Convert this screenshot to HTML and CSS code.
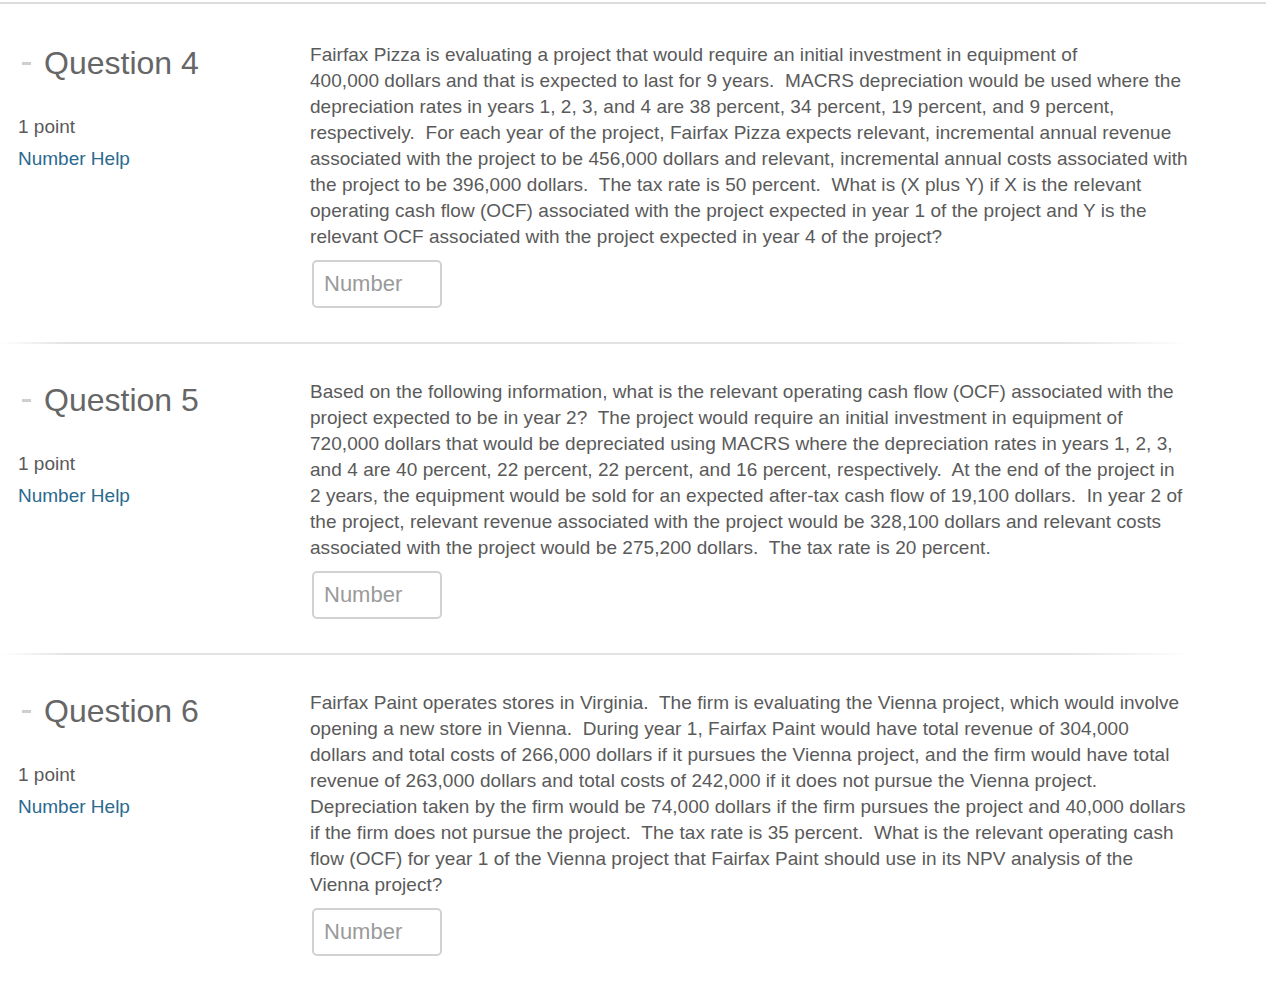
FILE: index.html
```html
<!DOCTYPE html>
<html>
<head>
<meta charset="utf-8">
<link rel="stylesheet" href="styles.css">
</head>
<body>
<div class="topline"></div>
<div class="quiz">
  <section class="question">
    <div class="meta">
      <h2 class="qtitle"><span class="dash"></span>Question 4</h2>
      <div class="points">1 point</div>
      <a class="help" href="#">Number Help</a>
    </div>
    <div class="body">
      <p class="prompt">Fairfax Pizza is evaluating a project that would require an initial investment in equipment of<br>400,000 dollars and that is expected to last for 9 years.&nbsp; MACRS depreciation would be used where the<br>depreciation rates in years 1, 2, 3, and 4 are 38 percent, 34 percent, 19 percent, and 9 percent,<br>respectively.&nbsp; For each year of the project, Fairfax Pizza expects relevant, incremental annual revenue<br>associated with the project to be 456,000 dollars and relevant, incremental annual costs associated with<br>the project to be 396,000 dollars.&nbsp; The tax rate is 50 percent.&nbsp; What is (X plus Y) if X is the relevant<br>operating cash flow (OCF) associated with the project expected in year 1 of the project and Y is the<br>relevant OCF associated with the project expected in year 4 of the project?</p>
      <input class="answer" type="text" placeholder="Number">
    </div>
  </section>
  <div class="divider"></div>
  <section class="question">
    <div class="meta">
      <h2 class="qtitle"><span class="dash"></span>Question 5</h2>
      <div class="points">1 point</div>
      <a class="help" href="#">Number Help</a>
    </div>
    <div class="body">
      <p class="prompt">Based on the following information, what is the relevant operating cash flow (OCF) associated with the<br>project expected to be in year 2?&nbsp; The project would require an initial investment in equipment of<br>720,000 dollars that would be depreciated using MACRS where the depreciation rates in years 1, 2, 3,<br>and 4 are 40 percent, 22 percent, 22 percent, and 16 percent, respectively.&nbsp; At the end of the project in<br>2 years, the equipment would be sold for an expected after-tax cash flow of 19,100 dollars.&nbsp; In year 2 of<br>the project, relevant revenue associated with the project would be 328,100 dollars and relevant costs<br>associated with the project would be 275,200 dollars.&nbsp; The tax rate is 20 percent.</p>
      <input class="answer" type="text" placeholder="Number">
    </div>
  </section>
  <div class="divider"></div>
  <section class="question">
    <div class="meta">
      <h2 class="qtitle"><span class="dash"></span>Question 6</h2>
      <div class="points">1 point</div>
      <a class="help" href="#">Number Help</a>
    </div>
    <div class="body">
      <p class="prompt">Fairfax Paint operates stores in Virginia.&nbsp; The firm is evaluating the Vienna project, which would involve<br>opening a new store in Vienna.&nbsp; During year 1, Fairfax Paint would have total revenue of 304,000<br>dollars and total costs of 266,000 dollars if it pursues the Vienna project, and the firm would have total<br>revenue of 263,000 dollars and total costs of 242,000 if it does not pursue the Vienna project.<br>Depreciation taken by the firm would be 74,000 dollars if the firm pursues the project and 40,000 dollars<br>if the firm does not pursue the project.&nbsp; The tax rate is 35 percent.&nbsp; What is the relevant operating cash<br>flow (OCF) for year 1 of the Vienna project that Fairfax Paint should use in its NPV analysis of the<br>Vienna project?</p>
      <input class="answer" type="text" placeholder="Number">
    </div>
  </section>
</div>
</body>
</html>
```
FILE: styles.css
```css
html, body {
  margin: 0;
  padding: 0;
  background: #fff;
}
body {
  font-family: "Liberation Sans", Arial, Helvetica, sans-serif;
  color: #5a5a5a;
}
.topline {
  height: 2px;
  margin-top: 2px;
  background: #dcdcdc;
}
.quiz {
  display: flex;
  flex-direction: column;
}
.question {
  display: grid;
  grid-template-columns: 292px 920px;
  padding: 35px 0 34px 18px;
}
.question:first-child {
  padding-top: 38px;
}
.meta {
  display: flex;
  flex-direction: column;
  align-items: flex-start;
}
.qtitle {
  margin: 0;
  padding-left: 4px;
  font-size: 32px;
  font-weight: normal;
  line-height: 42px;
  color: #666;
  display: flex;
  align-items: center;
}
.dash {
  display: inline-block;
  width: 9px;
  height: 3px;
  background: #cfcfcf;
  margin-right: 13px;
}
.points {
  margin-top: 27px;
  font-size: 19px;
  line-height: 32px;
  color: #5a5a5a;
}
.help {
  font-size: 19px;
  line-height: 32px;
  color: #2a6a8e;
  text-decoration: none;
}
.body {
  display: flex;
  flex-direction: column;
  align-items: flex-start;
}
.prompt {
  margin: 0;
  font-size: 19px;
  letter-spacing: 0.05px;
  line-height: 26px;
  color: #5a5a5a;
  white-space: nowrap;
}
.answer {
  margin: 10px 0 0 2px;
  width: 130px;
  height: 48px;
  box-sizing: border-box;
  border: 2px solid #d2d2d2;
  border-radius: 5px;
  padding: 0 10px;
  font-family: "Liberation Sans", Arial, Helvetica, sans-serif;
  font-size: 22px;
  color: #555;
  background: #fff;
  outline: none;
}
.answer::placeholder {
  color: #9a9a9a;
}
.divider {
  height: 2px;
  width: 1190px;
  background: linear-gradient(to right, rgba(221,221,221,0) 0px, #e2e2e2 70px, #e2e2e2 1060px, rgba(221,221,221,0) 1190px);
}
```
